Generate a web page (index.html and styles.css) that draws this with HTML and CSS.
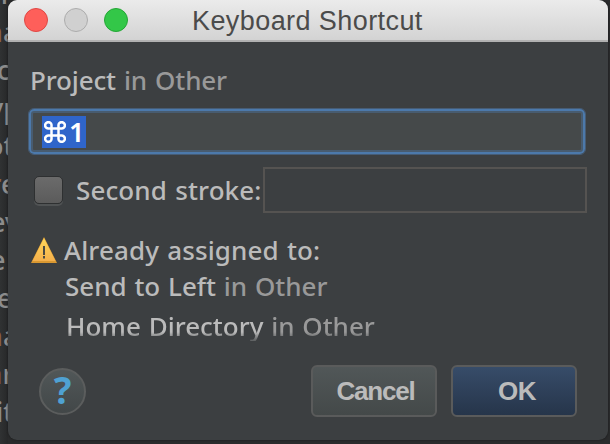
FILE: index.html
```html
<!DOCTYPE html>
<html lang="en">
<head>
<meta charset="utf-8">
<title>Keyboard Shortcut</title>
<link rel="stylesheet" href="styles.css">
</head>
<body>
<div class="editor">
  <div class="line s1"><b>n</b></div>
  <div class="line s2"><i>n</i>a</div>
  <div class="line s3">c</div>
  <div class="line s4">yp</div>
  <div class="line s5">ot</div>
  <div class="line s6"><i>r</i>e</div>
  <div class="line s7">ev</div>
  <div class="line s8">e</div>
  <div class="line s9">e</div>
  <div class="line s10"><i>n</i>a</div>
  <div class="line s11"><i>a</i>r</div>
  <div class="line s12">it</div>
</div>
<main class="dialog">
  <header class="titlebar">
    <div class="lights"><span class="light close"></span><span class="light minimize"></span><span class="light zoom"></span></div>
    <h1>Keyboard Shortcut</h1>
  </header>
  <section class="content">
    <p class="action">Project <em>in Other</em></p>
    <div class="field focused"><span class="selection"><svg width="22" height="22" viewBox="0 0 22 22"><path d="M7.5 7.5H4.8A3.2 3.2 0 1 1 7.5 4.8V17.2A3.2 3.2 0 1 1 4.8 14.5H17.2A3.2 3.2 0 1 1 14.5 17.2V4.8A3.2 3.2 0 1 1 17.2 7.5Z"/></svg><span>1</span></span></div>
    <div class="second"><span class="check"></span><label>Second stroke:</label><span class="field plain"></span></div>
    <div class="warning">
      <svg width="26" height="26" viewBox="0 0 26 26"><defs><linearGradient id="w" x1="0" y1="0" x2="0" y2="1"><stop offset="0" stop-color="#ffd75a"/><stop offset="1" stop-color="#f4b04c"/></linearGradient></defs><path d="M13 0L26 26H0Z" fill="#d99831"/><path d="M13 1L24.5 24H1.5Z" fill="url(#w)"/><path d="M12 9h2v9h-2zM12 19h2v2.4h-2z" fill="#4b4a43"/></svg>
      <p>Already assigned to:</p>
    </div>
    <p class="conflict first">Send to Left <em>in Other</em></p>
    <p class="conflict last">Home Directory <em>in Other</em></p>
    <footer class="actions">
      <span class="help">?</span>
      <span class="button cancel">Cancel</span>
      <span class="button ok">OK</span>
    </footer>
  </section>
</main>
</body>
</html>
```
FILE: styles.css
```css
* { box-sizing: border-box; }
body {
  margin: 0;
  width: 610px;
  height: 444px;
  overflow: hidden;
  display: flex;
  background: #2a2b2c;
  font-family: "Noto Sans", sans-serif;
  font-size: 26px;
  font-weight: 500;
  color: #bbb;
}
p, h1 { margin: 0; font-weight: 500; white-space: nowrap; }
em, i, b { font-style: normal; font-weight: 500; }

.editor {
  flex: none;
  width: 8px;
  height: 444px;
  overflow: hidden;
  background: linear-gradient(90deg, #303233, #272829);
  font-size: 27px;
  color: #8c8c8c;
}
.line { height: 38px; line-height: 38px; white-space: nowrap; }
.line i { color: #8a6242; }
.s1 { margin-top: -25px; margin-left: -9px; }
.s2 { margin-left: -14px; }
.s3 { margin-left: -3px; }
.s4 { margin-left: -11px; }
.s5 { margin-left: -13px; }
.s6 { margin-left: -10px; }
.s7 { margin-left: -10px; }
.s8 { margin-left: -10px; }
.s9 { margin-left: -3px; }
.s10 { margin-left: -14px; }
.s11 { margin-left: -13px; }
.s12 { margin-left: -4px; }

.dialog {
  flex: none;
  width: 600px;
  height: 440px;
  background: #3c3f41;
  border-radius: 9px;
  box-shadow: 0 0 2px 0 #151617;
  overflow: hidden;
}
.titlebar {
  height: 42px;
  display: flex;
  background: linear-gradient(#ebebeb, #d3d3d3);
  border-bottom: 2px solid #b1b1b1;
}
.lights { display: flex; gap: 16px; padding: 8px 0 0 16px; width: 184px; }
.light { width: 24px; height: 24px; border-radius: 50%; }
.close { background: #fe5f5a; border: 1px solid #df4744; }
.minimize { background: #d0d0d0; border: 1px solid #acacac; }
.zoom { background: #33c748; border: 1px solid #24a636; }
h1 {
  font: 27px/42px "Liberation Sans", sans-serif;
  color: #4b4b4b;
  letter-spacing: .42px;
}

.content { padding: 21px 0 0 20px; }
.action { height: 46px; line-height: 35px; padding-left: 2px; letter-spacing: -.15px; word-spacing: 1.5px; }
em { color: #999; }
.field { display: block; }
.focused {
  width: 558px;
  height: 47px;
  margin-top: -1px;
  padding: 7px 0 0 13px;
  background: #45494a;
  background-clip: padding-box;
  border: 1px solid #465c75;
  border-radius: 6px;
  box-shadow: inset 0 0 0 2px #4c79ab, inset 0 0 0 4px #485c70;
}
.selection {
  display: flex;
  align-items: center;
  width: 44px;
  height: 32px;
  background: #2f65ca;
  color: #fff;
  line-height: 32px;
}
.selection svg { margin-left: 2px; fill: none; stroke: #fff; stroke-width: 2.5; }
.selection span { margin-left: 3px; font-size: 27px; font-weight: 600; }
.second { display: flex; align-items: center; height: 46px; margin-top: 12px; }
.check {
  width: 29px;
  height: 28px;
  margin-left: 6px;
  border: 1px solid #2e3031;
  border-radius: 5px;
  background: linear-gradient(#6b6b6b, #5b5b5b);
  box-shadow: 0 2px 0 #505354;
}
.second label { width: 200px; padding-left: 13px; white-space: nowrap; letter-spacing: .1px; word-spacing: 1.5px; }
.plain { width: 324px; height: 46px; border: 2px solid #555351; }
.warning { display: flex; height: 36px; margin-top: 19px; padding-left: 3px; line-height: 36px; letter-spacing: .12px; word-spacing: 1.3px; }
.warning svg { margin: 5px 7px 0 0; }
.conflict { padding-left: 37px; height: 40px; line-height: 36px; word-spacing: 1px; }
.first { margin-top: 0; }
.last {
  padding-left: 38px;
  height: 33px;
  overflow: hidden;
  -webkit-mask-image: linear-gradient(#000 0, #000 24px, rgba(0,0,0,.3) 32px);
  mask-image: linear-gradient(#000 0, #000 24px, rgba(0,0,0,.3) 32px);
}
.actions { display: flex; align-items: center; height: 52px; margin-top: 24px; padding-left: 11px; }
.help {
  width: 47px;
  height: 47px;
  border: 2px solid #5b5d5d;
  border-radius: 50%;
  background: linear-gradient(#515758, #424748);
  color: #4fa1d2;
  font-size: 37px;
  font-weight: 700;
  line-height: 40px;
  text-align: center;
}
.button {
  width: 126px;
  height: 52px;
  border: 2px solid #5a5b5b;
  border-radius: 6px;
  background: linear-gradient(#515758, #444949);
  font: bold 26px/48px "Liberation Sans", sans-serif;
  text-align: center;
}
.cancel { margin-left: 225px; letter-spacing: -1.2px; padding-left: 3px; }
.ok { margin-left: 14px; padding-left: 6px; letter-spacing: -.5px; background: linear-gradient(#374c69, #26354a); }
```
